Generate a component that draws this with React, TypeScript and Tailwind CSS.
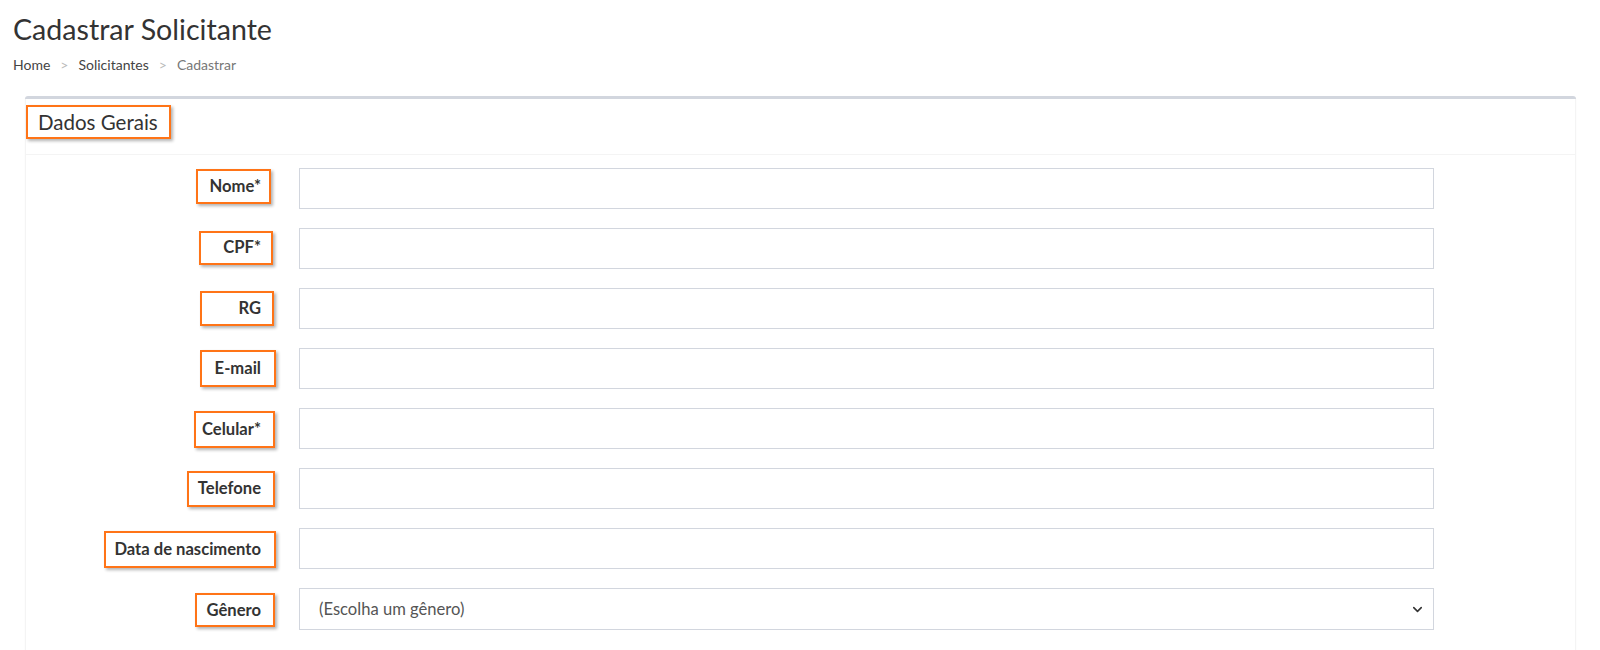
import { ChevronDown } from "lucide-react";

type Field = {
  label: string;
  box: string; // classes for the orange highlight box round the label
  select?: boolean;
};

const FIELDS: Field[] = [
  { label: "Nome*", box: "w-[75px] h-[35px] mr-[5px] pr-[8px] -translate-y-[2px]" },
  { label: "CPF*", box: "w-[74px] h-[34px] mr-[3px] pr-[10px] -translate-y-[1px]" },
  { label: "RG", box: "w-[74px] h-[35px] mr-[2px] pr-[11px]" },
  { label: "E-mail", box: "w-[76px] h-[37px] mr-0 pr-[13px]" },
  { label: "Celular*", box: "w-[81px] h-[37px] mr-[1px] pr-[12px] translate-y-[1px]" },
  { label: "Telefone", box: "w-[88px] h-[36px] mr-[1px] pr-[12px]" },
  { label: "Data de nascimento", box: "w-[172px] h-[37px] mr-0 pr-[13px] translate-y-[1px]" },
  { label: "Gênero", box: "w-[80px] h-[34px] mr-[1px] pr-[12px] translate-y-[1px]", select: true },
];

export default function App() {
  return (
    <div className="min-h-screen bg-white font-['Lato','Noto_Sans',sans-serif] text-[#333]">
      {/* cabeçalho da página */}
      <div className="px-[13px] pt-[12px]">
        <h1 className="text-[28.6px] leading-[34px] font-normal">
          Cadastrar Solicitante
        </h1>
        <nav className="mt-[9px] flex items-center text-[14px] leading-[20px] text-[#444]">
          <span>Home</span>
          <span className="px-[10px] text-[#bbb]">&gt;</span>
          <span>Solicitantes</span>
          <span className="px-[10px] text-[#bbb]">&gt;</span>
          <span className="text-[#777]">Cadastrar</span>
        </nav>
      </div>

      {/* card */}
      <section className="ml-[25px] mr-[24px] mt-[21px] border-t-[3px] border-[#d2d6de] rounded-t-[3px] bg-white shadow-[0_1px_1px_rgba(0,0,0,0.08)]">
        <div className="h-[56px] border-b border-[#f4f4f4] border-x border-x-[#f4f4f4] pt-[6px]">
          <div className="inline-flex h-[34px] w-[145px] items-center border-2 border-[#ff7417] pl-[10px] text-[20.5px] text-[#333] shadow-[2px_2px_3px_rgba(0,0,0,0.3)]">
            Dados Gerais
          </div>
        </div>

        <div className="flex flex-col gap-[19px] border-x border-[#f4f4f4] pt-[13px] pb-[20px]">
          {FIELDS.map((f) => (
            <div key={f.label} className="flex items-center">
              <div className="flex w-[250px] justify-end">
                <label
                  className={`flex items-center justify-end whitespace-nowrap border-2 border-[#ff7417] text-[16.6px] font-bold text-[#333] shadow-[2px_2px_3px_rgba(0,0,0,0.3)] ${f.box}`}
                >
                  {f.label}
                </label>
              </div>
              {f.select ? (
                <div className="ml-[23px] flex h-[42px] w-[1135px] items-center justify-between border border-[#d2d6de] pl-[19px] pr-[8px] text-[16.6px] text-[#555]">
                  <span>(Escolha um gênero)</span>
                  <ChevronDown size={15} strokeWidth={2.5} className="text-[#333]" />
                </div>
              ) : (
                <input
                  type="text"
                  className="ml-[23px] h-[41px] w-[1135px] border border-[#d2d6de] px-[12px] text-[15px] outline-none"
                />
              )}
            </div>
          ))}
        </div>
      </section>
    </div>
  );
}
